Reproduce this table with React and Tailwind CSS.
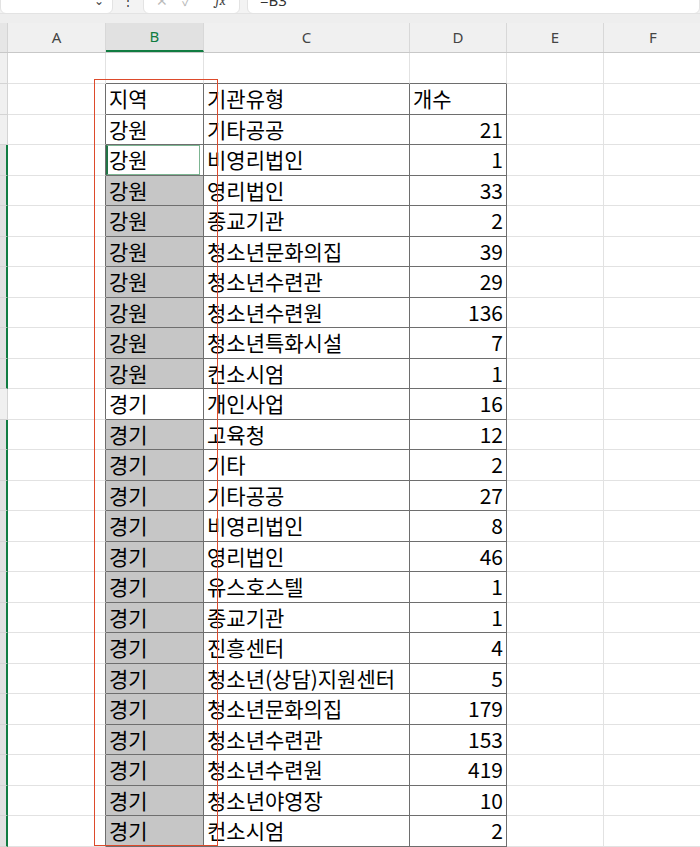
import React from "react";

const data = [
  ["강원", "기타공공", "21"],
  ["강원", "비영리법인", "1"],
  ["강원", "영리법인", "33"],
  ["강원", "종교기관", "2"],
  ["강원", "청소년문화의집", "39"],
  ["강원", "청소년수련관", "29"],
  ["강원", "청소년수련원", "136"],
  ["강원", "청소년특화시설", "7"],
  ["강원", "컨소시엄", "1"],
  ["경기", "개인사업", "16"],
  ["경기", "고육청", "12"],
  ["경기", "기타", "2"],
  ["경기", "기타공공", "27"],
  ["경기", "비영리법인", "8"],
  ["경기", "영리법인", "46"],
  ["경기", "유스호스텔", "1"],
  ["경기", "종교기관", "1"],
  ["경기", "진흥센터", "4"],
  ["경기", "청소년(상담)지원센터", "5"],
  ["경기", "청소년문화의집", "179"],
  ["경기", "청소년수련관", "153"],
  ["경기", "청소년수련원", "419"],
  ["경기", "청소년야영장", "10"],
  ["경기", "컨소시엄", "2"],
];

function RowHeader({ selected }) {
  return (
    <div
      className={
        selected
          ? "w-[8px] shrink-0 bg-[#e1e1e1] border-b border-[#d4d4d4] border-r-2 border-r-[#107c41]"
          : "w-[8px] shrink-0 bg-[#f0f0f0] border-b border-[#d4d4d4] border-r border-r-[#d4d4d4]"
      }
    />
  );
}

export default function App() {
  return (
    <div
      className="relative w-[700px] h-[847px] overflow-hidden bg-white"
      style={{ fontFamily: '"Noto Sans CJK KR", "Noto Sans", sans-serif' }}
    >
      {/* toolbar (cut off at the top edge, as in the screenshot) */}
      <div className="h-[14px] bg-[#f3f3f3] flex items-start overflow-hidden border-b border-[#e3e3e3]">
        <div className="w-[113px] h-[28px] -mt-[14px] bg-white rounded-md border border-[#e3e3e3] flex items-center justify-end pr-[8px] text-[12px] text-[#444]">
          ⌄
        </div>
        <div className="w-[30px] h-[14px] flex items-start justify-center text-[12px] leading-none text-[#333] -mt-[6px]">
          ⋮
        </div>
        <div className="w-[97px] h-[28px] -mt-[14px] bg-white rounded-md border border-[#e3e3e3] flex items-center gap-[14px] pl-[12px] text-[14px] text-[#bbb]">
          <span>✕</span>
          <span>✓</span>
          <span className="italic text-[#444] font-serif ml-[10px]">fx</span>
        </div>
        <div
          className="flex-1 ml-[7px] h-[28px] -mt-[14px] bg-white rounded-md border border-[#e3e3e3] flex items-center pl-[12px] text-[15px] text-[#333]"
          style={{ fontFamily: '"Noto Sans", sans-serif' }}
        >
          =B3
        </div>
      </div>
      {/* band */}
      <div className="h-[9px] bg-[#eeeeee]" />
      {/* column header */}
      <div
        className="flex h-[30px] bg-[#f0f0f0] border-b border-[#c8c8c8] text-[15px] text-[#444]"
        style={{ fontFamily: '"Noto Sans", sans-serif' }}
      >
        <div className="w-[8px] shrink-0 border-r border-[#d4d4d4] bg-[#e6e6e6]" />
        <div className="w-[98px] shrink-0 flex items-center justify-center border-r border-[#d8d8d8]">A</div>
        <div className="w-[98px] shrink-0 flex items-center justify-center bg-[#e1e1e1] text-[#107c41] border-b-2 border-[#107c41] border-r border-r-[#d8d8d8]">
          B
        </div>
        <div className="w-[206px] shrink-0 flex items-center justify-center border-r border-[#d8d8d8]">C</div>
        <div className="w-[97px] shrink-0 flex items-center justify-center border-r border-[#d8d8d8]">D</div>
        <div className="w-[97px] shrink-0 flex items-center justify-center border-r border-[#d8d8d8]">E</div>
        <div className="w-[98px] shrink-0 flex items-center justify-center">F</div>
      </div>

      {/* row 1 empty */}
      <div className="flex h-[31px]">
        <RowHeader selected={false} />
        <div className="w-[98px] shrink-0 border-r border-b border-[#e2e2e2]" />
        <div className="w-[98px] shrink-0 border-r border-[#e2e2e2] border-b border-b-[#6e6e6e]" />
        <div className="w-[206px] shrink-0 border-r border-[#e2e2e2] border-b border-b-[#6e6e6e]" />
        <div className="w-[97px] shrink-0 border-r border-[#e2e2e2] border-b border-b-[#6e6e6e]" />
        <div className="w-[97px] shrink-0 border-r border-b border-[#e2e2e2]" />
        <div className="w-[98px] shrink-0 border-r border-b border-[#e2e2e2]" />
      </div>

      {/* header row */}
      <div className="flex h-[31px] text-[21px] text-black">
        <RowHeader selected={false} />
        <div className="w-[98px] shrink-0 border-r border-r-[#6e6e6e] border-b border-b-[#e2e2e2]" />
        <div className="w-[98px] shrink-0 border-r border-b border-[#6e6e6e] flex items-center px-[3px]">지역</div>
        <div className="w-[206px] shrink-0 border-r border-b border-[#6e6e6e] flex items-center px-[3px]">기관유형</div>
        <div className="w-[97px] shrink-0 border-r border-b border-[#6e6e6e] flex items-center px-[3px]">개수</div>
        <div className="w-[97px] shrink-0 border-r border-b border-[#e2e2e2]" />
        <div className="w-[98px] shrink-0 border-r border-b border-[#e2e2e2]" />
      </div>

      {data.map((r, i) => {
        const active = i === 1;
        const selected = i >= 1 && i !== 9;
        const gray = selected && !active;
        return (
          <div
            key={i}
            className={i % 2 === 0 ? "flex h-[30px] text-[21px] text-black" : "flex h-[31px] text-[21px] text-black"}
          >
            <RowHeader selected={selected} />
            <div className="w-[98px] shrink-0 border-r border-r-[#6e6e6e] border-b border-b-[#e2e2e2]" />
            <div
              className={
                gray
                  ? "w-[98px] shrink-0 border-r border-b border-[#6e6e6e] bg-[#c6c6c6] flex items-center px-[3px]"
                  : "w-[98px] shrink-0 border-r border-b border-[#6e6e6e] bg-white flex items-center px-[3px]"
              }
            >
              {active ? (
                <div className="-ml-[3px] w-[calc(100%+3px)] h-full border border-[#7db592] border-l-2 border-l-[#217346] flex items-center pl-[1px]">
                  {r[0]}
                </div>
              ) : (
                r[0]
              )}
            </div>
            <div className="w-[206px] shrink-0 border-r border-b border-[#6e6e6e] flex items-center px-[3px] whitespace-nowrap">
              {r[1]}
            </div>
            <div className="w-[97px] shrink-0 border-r border-b border-[#6e6e6e] flex items-center justify-end px-[3px]">
              {r[2]}
            </div>
            <div className="w-[97px] shrink-0 border-r border-b border-[#e2e2e2]" />
            <div className="w-[98px] shrink-0 border-r border-b border-[#e2e2e2]" />
          </div>
        );
      })}

      {/* red annotation box */}
      <div className="absolute left-[94px] top-[79px] w-[124px] h-[767px] border-[1.5px] border-[#dd4a2b] pointer-events-none" />
    </div>
  );
}
